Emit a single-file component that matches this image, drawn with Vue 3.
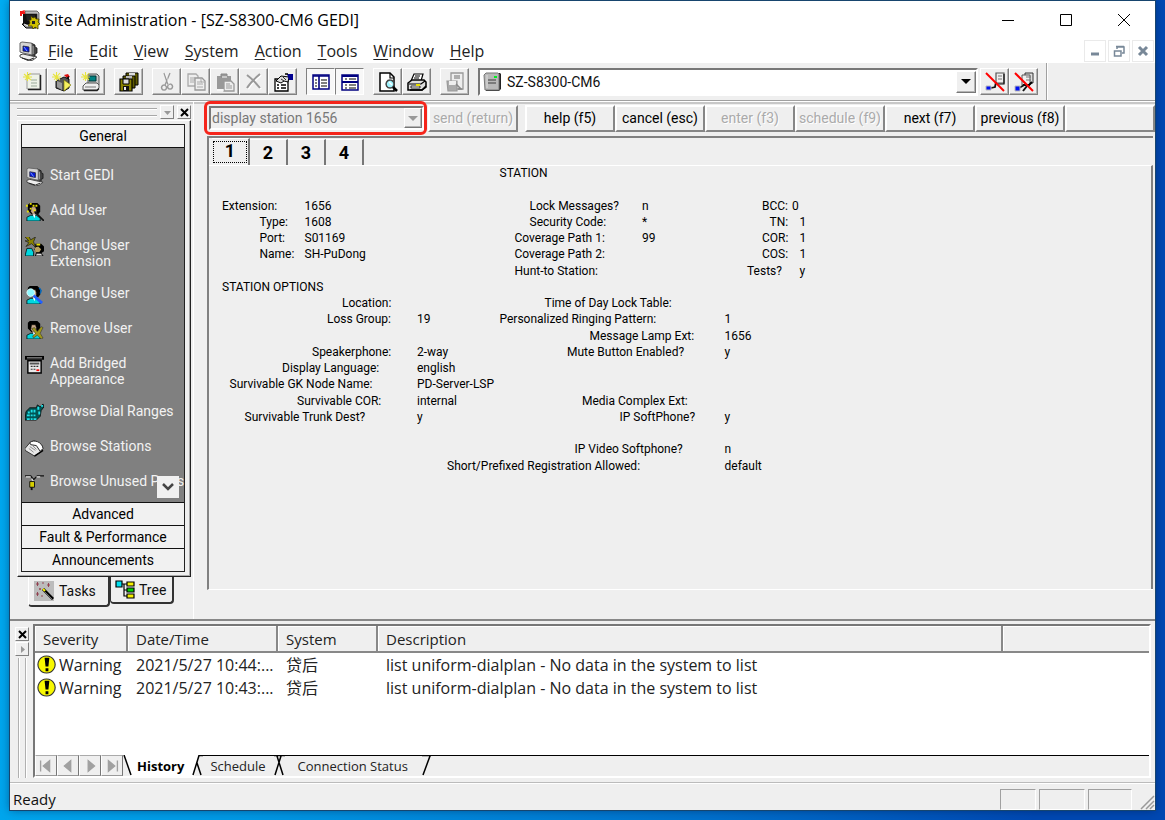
<script setup>
import { h, ref } from 'vue'

// Each shape is [path, fill, stroke, stroke width] on a 20 x 20 grid.
const head = [
  ['M5 1h8l3 3v6l-2 3H7L3 9V3z', '#000'],
  ['M7 5h4l1 3v3l-2 2H8L6 10z', '#c8a888', '#000', 0.5],
  ['M2 20v-4l4-2h6l4 3v3z', '#00d8e0', '#000', 0.8],
  ['M8 13l2 4 1-4z', '#fff']
]
const star = ['M1 2l7 6M8 1L2 8M0 5h9M4.500 0v9', 'none', '#e8e440', 1.1]
const docLines = ['M8 8h6M8 11h6M8 14h6', 'none', '#9a9', 1.2]
const monitor = [
  ['M13 2l4 2v2l2 1v5l-2 1v3l-4-1z', '#444', '#111', 0.8],
  ['M15 5v8', 'none', '#bbb', 1],
  ['M2 2l2-1 9 1 1 1v11l-9-2-3-1z', '#d4d4d4', '#666', 1],
  ['M5 5l6 1v5l-6-1z', '#0818d8', '#223', 0.8],
  ['M6 6l3 4', 'none', '#78a8ff', 1],
  ['M2 14l3-1 9 2 5 1-4 3-4 1-9-4z', '#eee', '#444', 1],
  ['M4 17l7 2 5-2', 'none', '#222', 1]
]
const redSlash = ['M1 1l18 18', 'none', '#f00', 2]
const icons = {
  app: [
    ['M3 3h15v12H3z', '#111'], ['M5 1h12l2 2v10h-2V4H5z', '#bbb', '#222', 0.6],
    ['M6 5h9v6H7z', '#222'], ['M2 14h12l2 4H6z', '#999', '#000', 1],
    ['M0 6V1h5v3H2v2z', '#f01818'], ['M2 0h3v2z', '#f66'],
    ['M11 6l2 2 2-1 1 2 3 0-1 3 2 2-2 1v4l-3-2-2 2-1-3-4 0 2-3-1-3 2 0z', '#cfc000', '#443c00', 0.8],
    ['M12 11h3v3h-3z', '#222'], ['M4 14l4 2', 'none', '#fff', 1]
  ],
  gedi: monitor,
  newDoc: [['M4 4l2-2h11v15H4z', '#eef2e8', '#999', 1], ['M17.500 3v14.500H5', 'none', '#222', 1.500], docLines, star],
  newUser: [['M4 9l8-4 5 2v9l-5 3-8-3z', '#555', '#111', 1], ['M5 9l5 2v7l-5-3z', '#999'], ['M12 3l4-1 2 3-3 1z', '#e01010'], ['M14 6l3-2v4z', '#111'], ['M12 8l7 5-7 6z', '#f6f060', '#777200', 0.6], star],
  newSystem: [['M7 2h9l2 2v9H7z', '#c8c8c8', '#555', 1], ['M8 4h7v5H8z', '#008080', '#033', 1], ['M2 14l3-3h11l2 2v3l-2 2H2z', '#eee', '#555', 1], ['M4 15h11', 'none', '#777', 1], ['M3 18.500h13l2-2', 'none', '#222', 1.500], star],
  disks: [['M7 1h12v12H7z', '#5f5a00', '#000', 1], ['M10 1h6v4h-6z', '#ddd'], ['M4 4h12v12H4z', '#5f5a00', '#000', 1], ['M7 4h6v4H7z', '#bbb'], ['M1 7h12v12H1z', '#888200', '#000', 1.200], ['M4 7h6v5H4z', '#ddd', '#000', 1], ['M4 14h6v5H4z', '#111'], ['M5 15h2v3H5z', '#eee']],
  cut: [['M7 1l4 12M13 1L8 13', 'none', '#999', 1.300], ['M7 13a2.500 2.500 0 1 0 .1 0M13 12a2.500 2.500 0 1 0 .1 0', 'none', '#999', 1.500], ['M9 14l4-3M8 1l4 10', 'none', '#fff', 0.500]],
  copy: [['M2 2h8l2 2v10H2z', '#eee', '#aaa', 1.300], ['M4 6h5M4 8h5M4 10h4', 'none', '#aaa'], ['M9 6h7l3 3v9H9z', '#eee', '#999', 1.300], ['M11 10h5M11 12h6M11 15h6M15 6v4h4', 'none', '#aaa']],
  paste: [['M2 4h14v13H2z', '#999'], ['M6 2h6v3H6z', '#999', '#888'], ['M7 5h5', 'none', '#fff'], ['M9 9h7l3 3v7H9z', '#eee', '#999', 1.300], ['M11 12h4M11 14h6M11 16h6', 'none', '#999'], ['M2 18h7', 'none', '#fff']],
  remove: [['M4 4c4 3 9 8 13 13M17 3C11 8 7 12 4 17', 'none', '#fff', 2], ['M3 3c4 3 9 8 13 13M16 2C10 7 6 11 3 16', 'none', '#999', 2]],
  properties: [['M2 7h13v12H2z', '#fff', '#000', 1.300], ['M4 13h2M8 13h5M4 16h2M8 16h5', 'none', '#000', 1.300], ['M3 9l5-5 8 1-1 5-4-1-3 2z', '#ddd', '#000', 1], ['M8 7l3 2M10 5l3 3', 'none', '#000', 0.800], ['M14 2h6v6h-4z', '#000090'], ['M12 2h3', 'none', '#000', 1.500]],
  viewTree: [['M2 3h16v14H2z', '#fff', '#000080', 1.500], ['M2 4h16M8 4v13', 'none', '#000080', 1.600], ['M4 8h2M4 11h2M4 14h2M10 8h6M10 11h6M10 14h6', 'none', '#000', 1.200]],
  viewList: [['M2 3h16v15H2z', '#fff', '#000080', 1.500], ['M2 4h16M2 10h16', 'none', '#000080', 2], ['M5 7h2M9 7h7M5 13h2M9 13h7M5 16h2M9 16h7', 'none', '#000', 1.200]],
  preview: [['M2 1h10l4 4v14H2z', '#fff', '#000', 1.500], ['M12 1v5h4', 'none', '#000', 1.200], ['M12 8a4 4 0 1 0 .1 0', '#9ff4ff', '#444', 1.500], ['M11 10l3 3', 'none', '#fff', 1.300], ['M15 15l4 4', 'none', '#000', 2.500]],
  print: [['M7 2h9l-2 7H4z', '#fff', '#000', 1.200], ['M8 4h5M7 6h5', 'none', '#000'], ['M1 11l4-3h12l2 2v5l-4 3H1z', '#ddd', '#000', 1.500], ['M2 12h12l4-3', 'none', '#000', 1.200], ['M4 14h9v2H4z', '#fff', '#000', 0.800], ['M9 13h4', 'none', '#e8e000', 2], ['M3 18h12l4-4', 'none', '#000', 1.500]],
  saveAs: [['M6 1h12v16H6z', '#eee', '#999', 1.300], ['M9 4h6M9 6h6', 'none', '#999', 1.300], ['M2 9h10v10H3z', '#aaa', '#999', 1.200], ['M4 9h7v4H4z', '#eee'], ['M11 12l5 5h-3', 'none', '#888', 1.500]],
  server: [['M3 2l2-1h12l1 1v15l-2 2H3z', '#222'], ['M1 3l2-2h12l1 1v16H2z', '#b8b8b8', '#777', 1], ['M5 8h8M5 11h8', 'none', '#666', 1.300], ['M11 4h3v2h-3z', '#00f020'], ['M4 3v13', 'none', '#ddd', 1]],
  unplug: [['M11 1h8v10h-8z', '#eee', '#555', 1.200], ['M13 4h4M13 7h4', 'none', '#777'], ['M19 2v10h-7', 'none', '#111', 1.200], ['M6 16l4-1 1-5', 'none', '#111', 1.800], ['M1 14h5v4H1z', '#0010f0', '#bbb', 1], redSlash],
  unplugAll: [['M11 1h8v10h-8z', '#ddd', '#333', 1], ['M8 3h8v10H8z', '#eee', '#555', 1], ['M12 5h5M12 8h5', 'none', '#777'], ['M9 13h6l3-3', 'none', '#000', 2], ['M5 16l7-4M9 19l4-5', 'none', '#111', 2], ['M1 14h5v5H1z', '#0010f0', '#bbb', 1], redSlash],
  addUser: [...head, ['M1 3h2v2H1zM5 1h2v2H5zM11 3h2v2h-2zM2 9h2v2H2zM5 6h2v2H5zM9 8h2v2H9zM8 3h2v2H8z', '#e8e000'], ['M10 10l10 10', 'none', '#111', 1.800]],
  changeExt: [['M11 7h6l3 3v5l-3 2h-5l-2-4z', '#000'], ['M10 11l4-1 3 3-2 3h-4z', '#b8a060'], ['M2 12h5l2 4v4H0z', '#00d8e0', '#000', 0.800], ['M12 17h5l2 3h-8z', '#ddd', '#000'], ['M0 0l4 4h-4l4 2-3 4 6-3 4 4-2-6 2-5-5 3-2-4z', '#8a8200', '#222', 0.800], ['M12 7h4v2h-4z', '#e8e000']],
  changeUser: [...head, ['M6 4a4 4 0 1 0 .1 0', '#8ff8ff', '#dff', 1], ['M9 11l9 8', 'none', '#2060ff', 3], ['M15 3l2 3-1 3', 'none', '#06b', 1.500]],
  removeUser: [...head, ['M7 9l3-1 3 4 4-5 2 1-3 6 3 5-2 1-4-4-4 3-1-2 3-3z', '#a09818', '#333', 0.6]],
  bridged: [['M0 1h20v4H0z', '#000'], ['M2 3h16', 'none', '#999', 1.200], ['M3 6h14v13H3z', '#e8e8e8', '#000', 1.500], ['M5 8h10v2H5z', '#555'], ['M6 12h2M9 12h2M12 12h2M6 15h2M9 15h2', 'none', '#333', 1.300], ['M12 16h3', 'none', '#f00', 1.800]],
  dial: [['M1 9l4-4h7l1-3 3 2 3-3 1 3-3 4-1 6-4 4H0z', '#055', '#000', 0.8], ['M3 9h2v2H3zM6 7h2v3H6zM9 7h2v3H9zM2 12h3v2H2zM6 12h2v2H6zM9 12h2v2H9zM2 16h3v2H2zM6 16h2v2H6zM9 16h3v2H9zM13 4h2v3h-2zM17 2h2v2h-2zM14 9h2v3h-2z', '#20e0e8']],
  phone: [['M0 11l6-7 4-1 8 5 0 6-8 5-10-6z', '#e8e8e8', '#333', 1], ['M5 5c4-4 13-1 14 6l-3 3-4-6-6-1z', '#fff', '#222', 1], ['M5 9l6 4M4 11l5 4M8 8l4 4', 'none', '#888', 1], ['M10 19l9-6', 'none', '#000', 1.500]],
  port: [['M0 3h6l3 4 4-4h7', 'none', '#111', 1.500], ['M1 4h5M12 4h4M7 6l2 3v5', 'none', '#ddd', 1.300], ['M5 9h5v6H5z', '#d8d000', '#111', 1], ['M7 15v3', 'none', '#111', 2]],
  wand: [['M0 0h20v20H0z', '#bcbcbc'], ['M9 8l10 10', 'none', '#000', 3], ['M9 8l2 2', 'none', '#f5f000', 2], ['M11 11l7 7', 'none', '#888', 0.800], ['M2 3h3M3.500 1v4M8 2h2M13 4h3M14.500 2v4M5 8h2M6 7v2M2 13h3M3.500 11v4M7 15h2', 'none', '#903848', 0.900]],
  tree: [['M4 4h8M9 4v12h4M9 10h4', 'none', '#000', 1.200], ['M1 1h6v6H1z', '#00e0f0', '#000', 1.200], ['M12 2h7v4h-7zM12 14h7v4h-7z', '#f5f000', '#000', 1.200], ['M12 8h7v4h-7z', '#00d000', '#000', 1.200]],
  warning: [['M10 1a9 9 0 1 0 .1 0z', '#f8f800', '#333', 1.200], ['M8 3h5l-1 9H9zM9 14h3v3H9z', '#000']]
}
const Icon = (p) =>
  h('svg', { class: 'icon', viewBox: '0 0 20 20', width: p.size || 20, height: p.size || 20, 'aria-hidden': 'true' },
    icons[p.name].map(([d, fill, stroke, w]) => h('path', { d, fill, stroke: stroke || 'none', 'stroke-width': w || 1 })))
Icon.props = ['name', 'size']

const menus = ['File', 'Edit', 'View', 'System', 'Action', 'Tools', 'Window', 'Help']
const toolGroups = [
  [['newDoc', 'New'], ['newUser', 'New user'], ['newSystem', 'New system']],
  [['disks', 'Save all']],
  [['cut', 'Cut'], ['copy', 'Copy'], ['paste', 'Paste'], ['remove', 'Delete'], ['properties', 'Properties']],
  [['viewTree', 'Tree view', true], ['viewList', 'Log view', true]],
  [['preview', 'Preview'], ['print', 'Print']],
  [['saveAs', 'Export']]
]
const tasks = [
  ['gedi', 'Start GEDI'], ['addUser', 'Add User'], ['changeExt', 'Change User Extension'],
  ['changeUser', 'Change User'], ['removeUser', 'Remove User'], ['bridged', 'Add Bridged Appearance'],
  ['dial', 'Browse Dial Ranges'], ['phone', 'Browse Stations'], ['port', 'Browse Unused Ports']
]
const actions = [
  ['help (f5)'], ['cancel (esc)'], ['enter (f3)', true], ['schedule (f9)', true],
  ['next (f7)'], ['previous (f8)']
]
const page = ref(1)

// Terminal form: [row, column, text] in character cells.
const fields = [
  [1, 38, 'STATION'],
  [3, 1, 'Extension:'], [3, 12, '1656'], [3, 42, 'Lock Messages?'], [3, 57, 'n'], [3, 73, 'BCC:'], [3, 77, '0'],
  [4, 6, 'Type:'], [4, 12, '1608'], [4, 42, 'Security Code:'], [4, 57, '*'], [4, 74, 'TN:'], [4, 78, '1'],
  [5, 6, 'Port:'], [5, 12, 'S01169'], [5, 40, 'Coverage Path 1:'], [5, 57, '99'], [5, 73, 'COR:'], [5, 78, '1'],
  [6, 6, 'Name:'], [6, 12, 'SH-PuDong'], [6, 40, 'Coverage Path 2:'], [6, 73, 'COS:'], [6, 78, '1'],
  [7, 40, 'Hunt-to Station:'], [7, 71, 'Tests?'], [7, 78, 'y'],
  [8, 1, 'STATION OPTIONS'],
  [9, 17, 'Location:'], [9, 44, 'Time of Day Lock Table:'],
  [10, 15, 'Loss Group:'], [10, 27, '19'], [10, 38, 'Personalized Ringing Pattern:'], [10, 68, '1'],
  [11, 50, 'Message Lamp Ext:'], [11, 68, '1656'],
  [12, 13, 'Speakerphone:'], [12, 27, '2-way'], [12, 47, 'Mute Button Enabled?'], [12, 68, 'y'],
  [13, 9, 'Display Language:'], [13, 27, 'english'],
  [14, 2, 'Survivable GK Node Name:'], [14, 27, 'PD-Server-LSP'],
  [15, 11, 'Survivable COR:'], [15, 27, 'internal'], [15, 49, 'Media Complex Ext:'],
  [16, 4, 'Survivable Trunk Dest?'], [16, 27, 'y'], [16, 54, 'IP SoftPhone?'], [16, 68, 'y'],
  [18, 48, 'IP Video Softphone?'], [18, 68, 'n'],
  [19, 31, 'Short/Prefixed Registration Allowed:'], [19, 68, 'default']
]
const log = [
  ['Warning', '2021/5/27 10:44:...', '贷后', 'list uniform-dialplan - No data in the system to list'],
  ['Warning', '2021/5/27 10:43:...', '贷后', 'list uniform-dialplan - No data in the system to list']
]
const navPaths = ['M4 4v12M14 4v12l-7-6z', 'M13 4v12l-7-6z', 'M8 4v12l7-6z', 'M16 4v12M6 4v12l7-6z']
</script>

<template>
  <div class="desktop">
    <div class="window">
      <header class="title">
        <Icon name="app" />
        <h1>Site Administration - [SZ-S8300-CM6 GEDI]</h1>
        <div class="captions">
          <button aria-label="Minimize"><svg width="14" height="14"><path d="M1 7.5h12" stroke="#000" /></svg></button>
          <button aria-label="Maximize"><svg width="14" height="14"><path d="M1.500 1.500h11v11h-11z" fill="none" stroke="#000" /></svg></button>
          <button aria-label="Close"><svg width="14" height="14"><path d="M1 1l12 12M13 1L1 13" stroke="#000" /></svg></button>
        </div>
      </header>

      <nav class="menu">
        <Icon name="gedi" />
        <button v-for="m in menus" :key="m"><u>{{ m[0] }}</u>{{ m.slice(1) }}</button>
        <div class="mdi">
          <button aria-label="Minimize form"><svg width="12" height="12"><path d="M2 9h8" stroke="#788898" stroke-width="3" /></svg></button>
          <button aria-label="Restore form"><svg width="12" height="12"><path d="M4 4V2h7v6H9M3 1.500h8M1.500 6h6.500v5H1.500z" fill="none" stroke="#788898" stroke-width="1.500" /></svg></button>
          <button aria-label="Close form"><svg width="12" height="12"><path d="M2 2l8 8M10 2l-8 8" stroke="#788898" stroke-width="3" /></svg></button>
        </div>
      </nav>

      <div class="toolbar">
        <div v-for="(g, i) in toolGroups" :key="i" class="group">
          <button v-for="t in g" :key="t[0]" class="tool" :class="{ pressed: t[2] }" :aria-label="t[1]">
            <Icon :name="t[0]" />
          </button>
        </div>
        <div class="combo system">
          <Icon name="server" />
          <select aria-label="System"><option>SZ-S8300-CM6</option></select>
          <span class="drop"></span>
        </div>
        <div class="group last">
          <button class="tool" aria-label="Disconnect"><Icon name="unplug" /></button>
          <button class="tool" aria-label="Disconnect all"><Icon name="unplugAll" /></button>
        </div>
      </div>

      <div class="workspace">
        <aside class="sidebar">
          <div class="grip">
            <span class="rails"></span>
            <button class="mini dim" aria-label="Collapse"><svg width="9" height="9"><path d="M1 3h7L4.500 7z" fill="#999" /></svg></button>
            <button class="mini" aria-label="Close tasks"><svg width="9" height="9"><path d="M1 1l7 7M8 1L1 8" stroke="#000" stroke-width="2" /></svg></button>
          </div>
          <div class="outlook">
            <div class="stack">
              <button class="section">General</button>
              <ul>
                <li v-for="t in tasks" :key="t[0]"><Icon :name="t[0]" size="19" /><a href="#">{{ t[1] }}</a></li>
              </ul>
              <button class="more" aria-label="Scroll down"><svg width="12" height="12"><path d="M1 3l5 5 5-5" fill="none" stroke="#444" stroke-width="2.500" /></svg></button>
              <button class="section">Advanced</button>
              <button class="section">Fault &amp; Performance</button>
              <button class="section">Announcements</button>
            </div>
          </div>
          <div class="side-tabs">
            <button class="on"><Icon name="wand" />Tasks</button>
            <button><Icon name="tree" />Tree</button>
          </div>
        </aside>

        <main class="editor">
          <div class="commands">
            <div class="marked">
              <div class="combo command">
                <select aria-label="Command" disabled><option>display station 1656</option></select>
                <span class="drop"></span>
              </div>
            </div>
            <button class="key send" disabled>send (return)</button>
            <div class="keys">
              <button v-for="a in actions" :key="a[0]" class="key" :disabled="a[1]">{{ a[0] }}</button>
              <span class="key"></span>
            </div>
          </div>
          <div class="form">
            <div class="pages">
              <button v-for="n in 4" :key="n" :class="{ on: n === page }" @click="page = n"><span>{{ n }}</span></button>
            </div>
            <div class="sheet">
              <div class="terminal">
                <span v-for="(f, i) in fields" :key="i" :style="{ gridRow: f[0], gridColumn: f[1] }">{{ f[2] }}</span>
              </div>
            </div>
          </div>
        </main>
      </div>

      <section class="log">
        <div class="log-grip">
          <button class="mini" aria-label="Close log"><svg width="9" height="9"><path d="M1 1l7 7M8 1L1 8" stroke="#000" stroke-width="2" /></svg></button>
          <button class="mini dim" aria-label="Expand log"><svg width="9" height="9"><path d="M3 1v7l4-3.500z" fill="#999" /></svg></button>
          <span class="v-rails"></span>
        </div>
        <div class="log-frame">
          <div class="log-body">
            <table>
              <colgroup><col class="c1" /><col class="c2" /><col class="c3" /><col /><col class="c5" /></colgroup>
              <thead><tr><th>Severity</th><th>Date/Time</th><th>System</th><th>Description</th><th></th></tr></thead>
              <tbody>
                <tr v-for="r in log" :key="r[1]">
                  <td><div class="sev"><Icon name="warning" size="19" />{{ r[0] }}</div></td>
                  <td>{{ r[1] }}</td><td>{{ r[2] }}</td><td>{{ r[3] }}</td><td></td>
                </tr>
              </tbody>
            </table>
          </div>
          <div class="log-tabs">
            <button v-for="(d, i) in navPaths" :key="i" class="nav" :aria-label="'Scroll tabs ' + (i + 1)">
              <svg viewBox="0 0 20 20" width="18" height="18"><path :d="d" fill="#a0a0a0" stroke="#a0a0a0" stroke-width="1.500" /></svg>
            </button>
            <svg width="9" height="21"><path d="M0 0h9v21H7z" fill="#fff" /><path d="M1 0l7 20" stroke="#000" stroke-width="1.500" /></svg>
            <button class="tab on">History</button>
            <svg width="11" height="21"><path d="M0 0h6v5L2 21H0z" fill="#fff" /><path d="M1 20L7 0.500h4M5 8l4 12" fill="none" stroke="#000" stroke-width="1.500" /></svg>
            <button class="tab schedule">Schedule</button>
            <svg width="11" height="21"><path d="M0 0.500h11M1 20L7 1M3 1l6 19" fill="none" stroke="#000" stroke-width="1.500" /></svg>
            <button class="tab connection">Connection Status</button>
            <svg width="9" height="21"><path d="M0 0.500h9M1 20L8 1" fill="none" stroke="#000" stroke-width="1.500" /></svg>
            <span class="rest"></span>
          </div>
        </div>
      </section>

      <footer class="status">
        <span class="ready">Ready</span>
        <span class="pane p1"></span><span class="pane p2"></span><span class="pane p3"></span>
        <svg width="16" height="16"><path d="M2 15L15 2M7 15l8-8M11 15l4-4" stroke="#999" stroke-width="1.500" /></svg>
      </footer>
    </div>
  </div>
</template>

<style>
body { margin: 0; }
</style>

<style scoped>
* { box-sizing: border-box; }
button, select { font: inherit; color: inherit; margin: 0; padding: 0; border: 0; border-radius: 0; background: none; appearance: none; }
svg { display: block; flex: none; }
.desktop {
  min-height: 100vh; display: flex; padding: 1px 10px 10px;
  background: linear-gradient(100deg, #00adf2 0%, #0098e4 30%, #0070cc 65%, #0048b2 90%);
  font-family: "Open Sans", "Noto Sans", "Noto Sans CJK SC", sans-serif; font-size: 15px; color: #111;
}
.window { flex: 1; min-width: 0; display: flex; flex-direction: column; background: #efefef; box-shadow: 0 0 0 1px #17456e, 0 0 9px rgba(0, 20, 60, .5); }
.title { height: 38px; display: flex; align-items: center; gap: 5px; padding: 0 2px 0 10px; background: #fff; }
.title h1 { margin: 0; font-size: 16px; font-weight: 400; color: #000; }
.captions { margin-left: auto; display: flex; }
.captions button { width: 58px; height: 38px; display: grid; place-items: center; }
.menu { height: 24px; display: flex; align-items: center; padding: 0 1px 0 8px; background: #fff; color: #222; font-size: 16px; }
.menu > button { margin-left: 4px; padding: 0 6px; line-height: 22px; }
.menu u { text-underline-offset: 2px; }
.mdi { margin-left: auto; display: flex; gap: 2px; }
.mdi button { width: 22px; height: 22px; display: grid; place-items: center; border: 1px solid #eaeaea; }
.toolbar {
  height: 37px; display: flex; align-items: center; gap: 9px; margin-right: 108px; padding: 0 8px 0 8px;
  border-right: 1px solid #a0a0a0; box-shadow: 1px 0 #fff;
}
.group { display: flex; }
.tool { width: 29px; height: 27px; display: grid; place-items: center; border: 1px solid; border-color: #fff #808080 #808080 #fff; box-shadow: inset -1px -1px #b4b4b4; }
.tool.pressed { border-color: #808080 #fff #fff #808080; background: #f8f8f8; box-shadow: none; }
.combo { display: flex; align-items: center; border: 2px solid; border-color: #777 #fff #fff #777; font-family: Roboto, "Liberation Sans", sans-serif; font-size: 14px; }
.combo select { flex: 1; min-width: 0; height: 22px; line-height: 22px; }
.system { flex: 1; height: 28px; background: #fff; margin-right: -7px; padding-left: 3px; gap: 4px; }
.drop { width: 20px; height: 22px; display: grid; place-items: center; background: #efefef; border: 1px solid; border-color: #fff #777 #777 #fff; box-shadow: inset -1px -1px #b4b4b4; }
.drop::after { content: ""; border: 5px solid transparent; border-top-color: #000; border-bottom: 0; }

.workspace { flex: 1; display: flex; border-top: 1px solid #a0a0a0; box-shadow: inset 0 1px #fff, inset 0 3px #c8c8c8; border-bottom: 2px solid #888; }
.sidebar { width: 184px; flex: none; padding: 4px 0 12px 7px; display: flex; flex-direction: column; font-family: Roboto, "Liberation Sans", sans-serif; font-size: 14px; border-right: 1px solid #fff; }
.grip { height: 14px; display: flex; align-items: center; gap: 3px; width: 174px; }
.rails { flex: 1; height: 8px; border: 1px solid #a8a8a8; border-left: 0; border-right: 0; box-shadow: 0 1px #fff, inset 0 1px #fff; }
.mini { width: 14px; height: 14px; display: grid; place-items: center; border: 1px solid; border-color: #fff #808080 #808080 #fff; }
.outlook { flex: 1; display: flex; margin-top: 1px; width: 174px; padding: 3px 5px 4px 3px; border: 1px solid; border-color: #fff #222 #222 #fff; box-shadow: inset -1px -1px #aaa; }
.stack { position: relative; flex: 1; display: flex; flex-direction: column; background: #808080; border: 1px solid #222; }
.section { height: 23px; flex: none; background: #f1f1f1; border-top: 1px solid #111; color: #000; }
.section:first-child { border-top: 0; border-bottom: 1px solid #111; }
ul { flex: 1; margin: 0; padding: 19px 0 0 3px; list-style: none; display: flex; flex-direction: column; gap: 16px; }
li { display: flex; gap: 6px; line-height: 16px; color: #f2f2f2; }
li a { color: inherit; text-decoration: none; width: 112px; }
li:nth-child(n + 7) a { width: auto; white-space: nowrap; }
.more { position: absolute; right: 5px; bottom: 73px; width: 22px; height: 22px; display: grid; place-items: center; background: #f0f0f0; }
.side-tabs { display: flex; align-items: flex-start; padding-left: 11px; height: 30px; }
.side-tabs button { height: 27px; width: 64px; display: flex; align-items: center; gap: 4px; padding-left: 4px; border: 1px solid #333; border-top: 0; border-right-width: 2px; border-bottom-width: 2px; border-radius: 0 0 4px 4px; }
.side-tabs .on { height: 30px; width: 82px; gap: 5px; padding-left: 5px; border-left-color: #fff; background: #efefef; }

.editor { flex: 1; min-width: 0; display: flex; flex-direction: column; padding-bottom: 29px; }
.commands { height: 34px; display: flex; align-items: center; font-family: Roboto, "Liberation Sans", sans-serif; font-size: 14px; }
.marked { width: 223px; height: 34px; margin-left: 10px; padding: 2px 0 2px 2px; border: 3px solid #f5251b; border-radius: 6px; }
.command { height: 24px; color: #777; }
.command select { opacity: 1; color: #777; height: 20px; line-height: 20px; padding-left: 1px; }
.command .drop { width: 18px; height: 20px; }
.command .drop::after { border-top-color: #999; }
.key { height: 27px; flex: 1; min-width: 0; text-align: center; color: #000; white-space: nowrap; border: 2px solid; border-color: #fff #868686 #868686 #fff; }
.key:disabled { color: #aaa; text-shadow: 1px 1px #fff; }
.send { flex: none; width: 90px; margin-left: 1px; }
.keys { flex: 1; display: flex; margin-left: 7px; }
.form { flex: 1; display: flex; flex-direction: column; margin: 1px 2px 0 13px; border-top: 2px solid #808080; border-left: 2px solid #808080; border-bottom: 1px solid #fff; }
.pages { display: flex; align-items: flex-end; height: 27px; padding-left: 3px; font-family: Roboto, "Liberation Sans", sans-serif; font-weight: 700; font-size: 18px; color: #000; }
.pages button { width: 38px; height: 26px; border-right: 2px solid #777; border-top: 1px solid #fff; }
.pages .on { height: 27px; padding: 1px; }
.pages .on span { display: block; height: 22px; line-height: 18px; border: 1px dotted #000; }
.sheet { flex: 1; border-top: 1px solid #fff; border-right: 2px solid #808080; }
.terminal {
  display: grid; grid-template-columns: repeat(82, minmax(0, 1fr)); grid-template-rows: repeat(19, minmax(0, 1fr));
  width: 615px; height: 309px; margin-left: 13px; font-family: Roboto, "Liberation Sans", sans-serif; font-size: 12px; line-height: 14px; color: #000;
}
.terminal span { white-space: nowrap; }

.log { height: 161px; display: flex; padding: 3px 4px 4px 5px; color: #222; }
.log-grip { width: 18px; display: flex; flex-direction: column; align-items: flex-start; padding-top: 3px; gap: 1px; }
.v-rails { flex: 1; width: 8px; margin: 1px 0 0 3px; border: 1px solid #b0b0b0; border-top: 0; border-bottom: 0; box-shadow: 1px 0 #fff, inset 1px 0 #fff; }
.log-frame { flex: 1; min-width: 0; display: flex; flex-direction: column; border: 2px solid; border-color: #777 #fff #fff #777; }
.log-body { flex: 1; background: #fff; }
table { width: 100%; border-collapse: separate; border-spacing: 0; table-layout: fixed; }
.c1 { width: 93px; } .c2 { width: 150px; } .c3 { width: 100px; } .c5 { width: 146px; }
th { height: 27px; padding: 0 0 0 8px; text-align: left; font-weight: 400; background: #efefef; border-right: 2px solid #888; border-bottom: 2px solid #888; box-shadow: inset 1px 1px #fff; }
th:last-child { border-right: 0; }
td { height: 23px; padding: 0 0 0 8px; white-space: nowrap; line-height: 20px; font-size: 16px; }
td:first-child { padding-left: 2px; }
.sev { display: flex; align-items: center; gap: 3px; }
.log-tabs { display: flex; height: 21px; font-size: 13px; }
.nav { width: 22px; display: grid; place-items: center; border: 1px solid; border-color: #aaa #777 #999 #fff; }
.tab { border-top: 1px solid #000; padding: 0 8px 0 7px; color: #222; }
.tab.on { border-top-color: #fff; background: #fff; font-weight: 700; color: #000; padding: 0 8px 0 5px; }
.tab.connection { padding: 0 14px 0 13px; }
.rest { flex: 1; border-top: 1px solid #000; }
.status { height: 28px; display: flex; align-items: flex-end; border-top: 1px solid #bbb; box-shadow: inset 0 1px #fff; color: #111; }
.ready { flex: 1; padding-left: 3px; line-height: 22px; }
.pane { height: 21px; margin-right: 3px; border: 1px solid; border-color: #a0a0a0 #fff #fff #a0a0a0; }
.p1 { width: 36px; } .p2 { width: 46px; } .p3 { width: 44px; margin-right: 7px; }
</style>
